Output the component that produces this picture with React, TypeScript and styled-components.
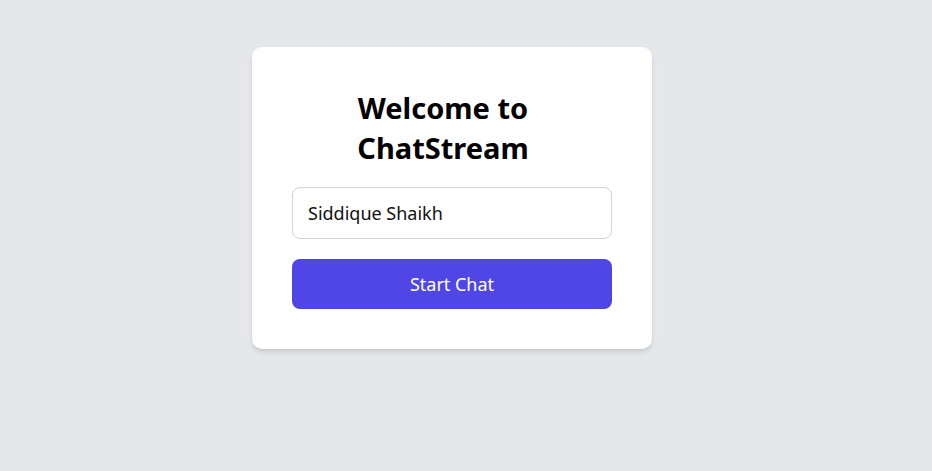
import React, { useState } from 'react';
import styled, { createGlobalStyle } from 'styled-components';

const GlobalStyle = createGlobalStyle`
    html, body { margin: 0; padding: 0; }
    body {
        background: #e5e7eb;
        font-family: "Noto Sans", "Open Sans", sans-serif;
        min-height: 100vh;
    }
    * { box-sizing: border-box; }
`;

const Page = styled.main`
    display: flex;
    justify-content: center;
    align-items: flex-start;
    padding: 47px 28px 0 0;
    min-height: 100vh;
`;

const Card = styled.div`
    width: 400px;
    padding: 41px 40px 40px;
    background: #ffffff;
    border-radius: 10px;
    box-shadow: 0 4px 6px -1px rgba(0,0,0,0.1), 0 2px 4px -2px rgba(0,0,0,0.1);
    display: flex;
    flex-direction: column;
`;

// heading sits a little left of the card's centre in the reference
const Title = styled.h1`
    margin: 0 0 19px;
    padding: 0 49px 0 31px;
    font-size: 29px;
    line-height: 40px;
    font-weight: 700;
    color: #000;
    text-align: center;
`;

const NameInput = styled.input`
    width: 100%;
    height: 52px;
    padding: 0 15px;
    border: 1px solid #d1d5db;
    border-radius: 8px;
    font-family: inherit;
    font-size: 18px;
    color: #111;
    outline: none;
    &:focus { border-color: #4f46e5; }
`;

const StartButton = styled.button`
    margin-top: 20px;
    width: 100%;
    height: 50px;
    border: none;
    border-radius: 8px;
    background: #4f46e5;
    color: #fff;
    font-family: inherit;
    font-size: 18px;
    cursor: pointer;
    &:hover { background: #4338ca; }
`;

export default function App() {
    const [name, setName] = useState('Siddique Shaikh');

    return (
        <>
            <GlobalStyle />
            <Page>
                <Card>
                    <Title>Welcome to ChatStream</Title>
                    <NameInput value={name} onChange={e => setName(e.target.value)} aria-label="Your name" />
                    <StartButton type="button">Start Chat</StartButton>
                </Card>
            </Page>
        </>
    );
}
